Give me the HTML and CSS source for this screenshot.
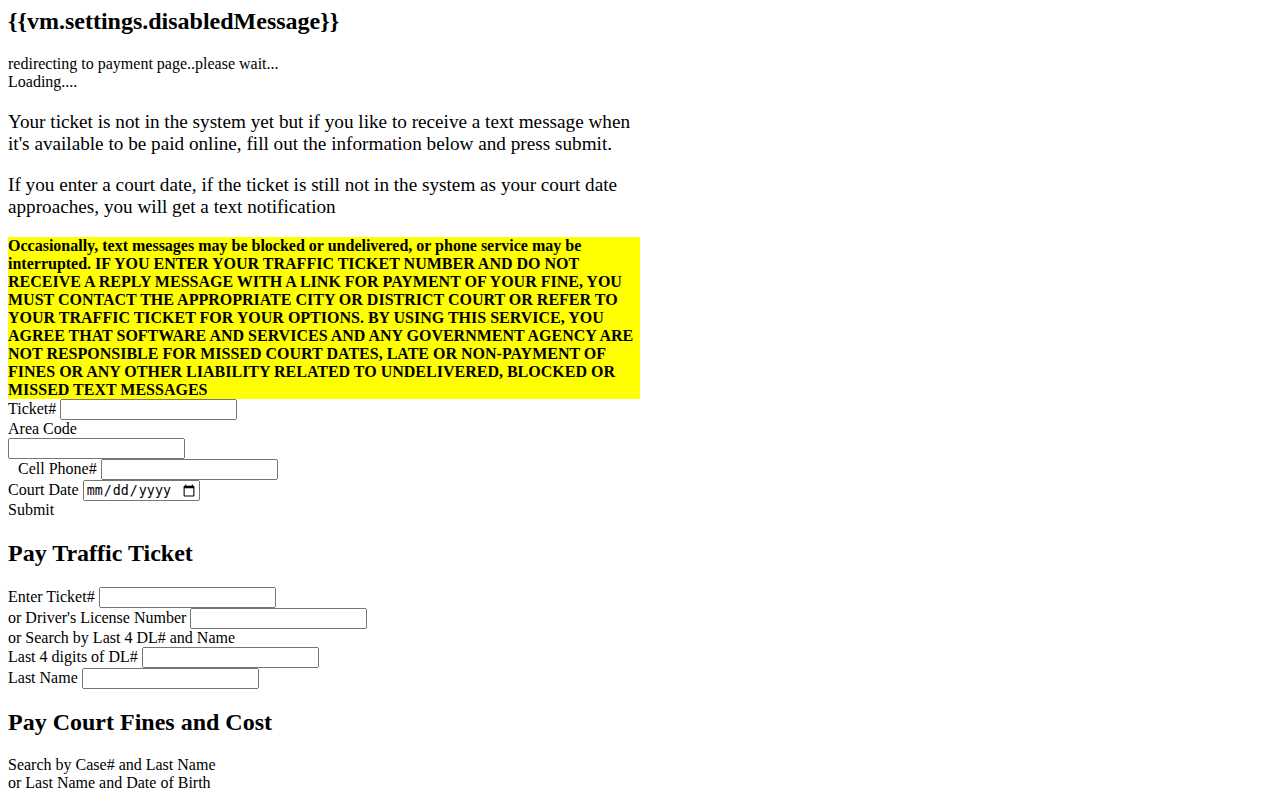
FILE: index.html
```html
<!DOCTYPE html>
<html lang="en">
<head>
<meta charset="utf-8">
<title>Pay Traffic Ticket</title>
<link rel="stylesheet" href="styles.css">
</head>
<body>
<div class="page">
  <h2 class="title">{{vm.settings.disabledMessage}}</h2>
  <div class="status">redirecting to payment page..please wait...<br>Loading....</div>
  <p class="lead">Your ticket is not in the system yet but if you like to receive a text message when it's available to be paid online, fill out the information below and press submit.</p>
  <p class="lead">If you enter a court date, if the ticket is still not in the system as your court date approaches, you will get a text notification</p>
  <div class="warning">Occasionally, text messages may be blocked or undelivered, or phone service may be interrupted. IF YOU ENTER YOUR TRAFFIC TICKET NUMBER AND DO NOT RECEIVE A REPLY MESSAGE WITH A LINK FOR PAYMENT OF YOUR FINE, YOU MUST CONTACT THE APPROPRIATE CITY OR DISTRICT COURT OR REFER TO YOUR TRAFFIC TICKET FOR YOUR OPTIONS. BY USING THIS SERVICE, YOU AGREE THAT SOFTWARE AND SERVICES AND ANY GOVERNMENT AGENCY ARE NOT RESPONSIBLE FOR MISSED COURT DATES, LATE OR NON-PAYMENT OF FINES OR ANY OTHER LIABILITY RELATED TO UNDELIVERED, BLOCKED OR MISSED TEXT MESSAGES</div>
  <form class="form sms-form">
    <div class="row"><label>Ticket#</label> <input class="field" type="text"></div>
    <div class="row"><label>Area Code</label></div>
    <div class="row"><input class="field" type="text"></div>
    <div class="row indent"><label>Cell Phone#</label> <input class="field" type="text"></div>
    <div class="row"><label>Court Date</label> <input class="field date" type="date"></div>
    <div class="row">Submit</div>
  </form>
  <h2 class="section">Pay Traffic Ticket</h2>
  <form class="form">
    <div class="row"><label>Enter Ticket#</label> <input class="field" type="text"></div>
    <div class="row"><label>or Driver's License Number</label> <input class="field" type="text"></div>
    <div class="row">or Search by Last 4 DL# and Name</div>
    <div class="row"><label>Last 4 digits of DL#</label> <input class="field" type="text"></div>
    <div class="row"><label>Last Name</label> <input class="field" type="text"></div>
  </form>
  <h2 class="section">Pay Court Fines and Cost</h2>
  <div class="status">Search by Case# and Last Name<br>or Last Name and Date of Birth</div>
</div>
</body>
</html>
```

FILE: styles.css
```css
html, body {
  background: #ffffff;
}
body {
  margin: 8px;
  font-family: "Liberation Serif", "Times New Roman", serif;
  font-size: 16px;
  color: #000000;
}
.page {
  width: 632px;
}
.title {
  margin: 0 0 19.92px 0;
  font-size: 24px;
  font-weight: bold;
}
.section {
  margin: 19.92px 0;
  font-size: 24px;
  font-weight: bold;
}
.lead {
  font-size: 19.2px;
  line-height: 22px;
  margin: 19.2px 0;
}
.status + .lead {
  margin-top: 20.2px;
}
.warning {
  background: #ffff00;
  font-weight: bold;
  line-height: 17.9px;
}
.form {
  margin: 0;
}
.sms-form .row {
  line-height: 18.8px;
}
.field {
  box-sizing: border-box;
  width: 177px;
  height: 21px;
}
.field.date {
  width: 117px;
}
.indent {
  padding-left: 10px;
}
```
